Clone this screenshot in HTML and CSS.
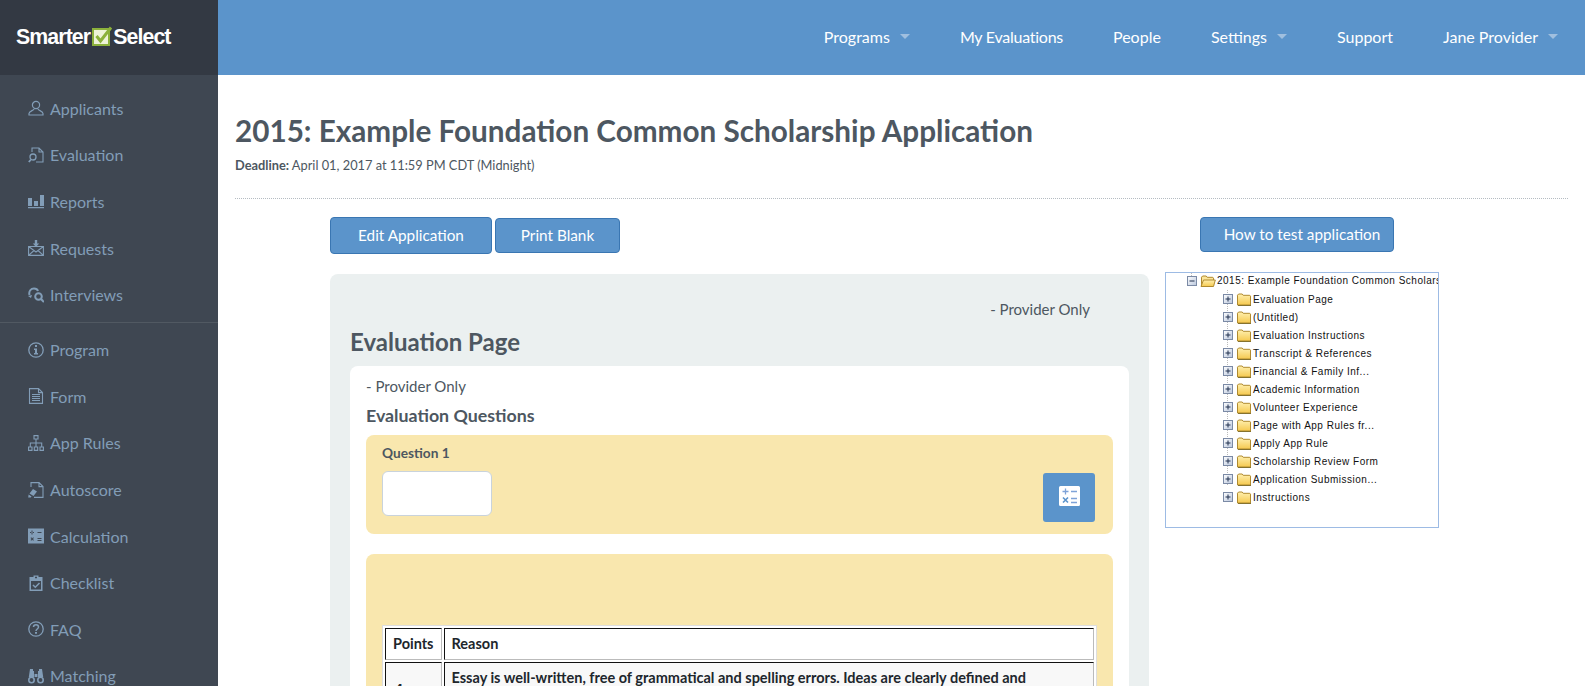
FILE: index.html
```html
<!DOCTYPE html>
<html lang="en">
<head>
<meta charset="utf-8">
<title>SmarterSelect</title>
<link rel="stylesheet" href="styles.css">
</head>
<body>
<svg class="defs" width="0" height="0">
  <defs>
    <linearGradient id="fold" x1="0" y1="0" x2="0" y2="1"><stop offset="0" stop-color="#fff0b0"/><stop offset="1" stop-color="#f5c94f"/></linearGradient>
    <linearGradient id="boxg" x1="0" y1="0" x2="1" y2="1"><stop offset="0" stop-color="#fff"/><stop offset="1" stop-color="#b9c6dc"/></linearGradient>
  </defs>
  <symbol id="folder" viewBox="0 0 16 14">
    <path d="M1.500 13V3.200L2.600 2h3.600l1 1.300h6.600l.7.800V13z" fill="url(#fold)" stroke="#b08a2e"/>
    <path d="M2 13.500h13" stroke="#85722f"/>
  </symbol>
  <symbol id="folder-open" viewBox="0 0 16 14">
    <path d="M1.500 12V3.200L2.600 2h3.600l1 1.300h5.600l.7.800V6" fill="#fbe59a" stroke="#b08a2e"/>
    <path d="M1 12.500L3.500 6h11.800l-1.800 6.500z" fill="url(#fold)" stroke="#b08a2e"/>
  </symbol>
  <symbol id="plus" viewBox="0 0 10 10">
    <rect x=".5" y=".5" width="9" height="9" fill="url(#boxg)" stroke="#7b8aa5"/>
    <path d="M2.500 5h5M5 2.500v5" stroke="#20304f"/>
  </symbol>
  <symbol id="minus" viewBox="0 0 10 10">
    <rect x=".5" y=".5" width="9" height="9" fill="url(#boxg)" stroke="#7b8aa5"/>
    <path d="M2.500 5h5" stroke="#20304f"/>
  </symbol>
</svg>
<div class="app">
  <aside class="sidebar">
    <div class="brand">
      <span class="brand-word">Smarter</span>
      <svg class="brand-check" viewBox="0 0 21 20" width="21" height="20"><rect x="1" y="3" width="16" height="16" fill="#eef3d8" stroke="#8cb13c" stroke-width="2"/><path d="M4.500 10l4 5L19 1.500" fill="none" stroke="#8cb13c" stroke-width="3"/></svg>
      <span class="brand-word">Select</span>
    </div>
    <nav class="side-nav">
      <a class="side-link"><svg class="side-icon" viewBox="0 0 16 16"><circle cx="8" cy="5" r="3.600" fill="none" stroke="currentColor" stroke-width="1.200"/><path d="M6 9c0 1.500-5 2-5 4.500V15h14v-1.500C15 11 10 10.500 10 9" fill="none" stroke="currentColor" stroke-width="1.200"/></svg>Applicants</a>
      <a class="side-link"><svg class="side-icon" viewBox="0 0 16 16"><path d="M4 5V1h7l4 4v10H8M11 1v4h4" fill="none" stroke="currentColor" stroke-width="1.100"/><circle cx="5" cy="10" r="3" fill="none" stroke="currentColor" stroke-width="1.300"/><path d="M3 12.500L.8 15" stroke="currentColor" stroke-width="1.800"/></svg>Evaluation</a>
      <a class="side-link"><svg class="side-icon" viewBox="0 0 16 16"><path fill="currentColor" d="M0 5h4v8H0zM6 8h4v5H6zM12 2h4v11h-4zM0 14h16v1.200H0z"/></svg>Reports</a>
      <a class="side-link"><svg class="side-icon" viewBox="0 0 16 16"><path d="M.6 6.500h14.800v8.900H.6zM.6 6.500L8 12l7.400-5.500M.6 15.400L6 10.500M15.400 15.400L10 10.500" fill="none" stroke="currentColor" stroke-width="1.100"/><path fill="currentColor" d="M6.800 0h2.400v3.500h2L8 7 4.800 3.500h2z"/></svg>Requests</a>
      <a class="side-link"><svg class="side-icon" viewBox="0 0 16 16"><path d="M1.500 8C.5 4 3 1.500 6 1.500c2 0 3.500 1 4 2.500" fill="none" stroke="currentColor" stroke-width="2"/><path fill="currentColor" d="M0 9l4-1-1 3z"/><circle cx="10.500" cy="9.500" r="3.300" fill="none" stroke="currentColor" stroke-width="2"/><path d="M13 12l3 3" stroke="currentColor" stroke-width="2.200"/></svg>Interviews</a>
      <div class="side-sep"></div>
      <a class="side-link"><svg class="side-icon" viewBox="0 0 16 16"><circle cx="8" cy="8" r="7.200" fill="none" stroke="currentColor" stroke-width="1.300"/><path fill="currentColor" d="M7 3h2v2H7zM6 6.500h3V11h1v1.500H6V11h1V8H6z"/></svg>Program</a>
      <a class="side-link"><svg class="side-icon" viewBox="0 0 16 16"><path d="M1.500.6h9l4 4v10.800h-13zM10.500.6v4h4" fill="none" stroke="currentColor" stroke-width="1.100"/><path d="M4 6.500h8M4 8.500h8M4 10.500h8M4 12.500h8" stroke="currentColor"/></svg>Form</a>
      <a class="side-link"><svg class="side-icon" viewBox="0 0 16 16"><path d="M6 .6h4v3.400H6zM.6 12h3.400v3.400H.6zM6.300 12h3.400v3.400H6.300zM12 12h3.400v3.400H12zM8 4v8M2.300 12V8h11.400v4" fill="none" stroke="currentColor" stroke-width="1.100"/></svg>App Rules</a>
      <a class="side-link"><svg class="side-icon" viewBox="0 0 16 16"><path d="M3 5V.6h8l4 4v10.800H6M11 .6v4h4" fill="none" stroke="currentColor" stroke-width="1.100"/><path fill="currentColor" d="M5 7l4 2.500L5.500 14 1.500 11.500zM.6 12.500l3 2-1 1H.2z"/></svg>Autoscore</a>
      <a class="side-link"><svg class="side-icon" viewBox="0 0 16 16"><path fill="currentColor" fill-rule="evenodd" d="M0 .5h16v15H0zM2 4h4v1H2zM3.500 2.500h1v4h-1zM9.500 4h4v1h-4zM2.500 10l.7-.7 1 1 1-1 .7.700-1 1 1 1-.7.700-1-1-1 1-.7-.7 1-1zM9.500 10h4v1h-4zM9.500 12h4v1h-4z"/></svg>Calculation</a>
      <a class="side-link"><svg class="side-icon" viewBox="0 0 16 16"><path fill="currentColor" fill-rule="evenodd" d="M1.500 2H5.500V.5h5V2h4v14h-13zM3 6v8.500h10V6zM7 1.800v1.500h2V1.800z"/><path d="M5 10l2.300 2.300L11.500 8" fill="none" stroke="currentColor" stroke-width="1.500"/></svg>Checklist</a>
      <a class="side-link"><svg class="side-icon" viewBox="0 0 16 16"><circle cx="8" cy="8" r="7.200" fill="none" stroke="currentColor" stroke-width="1.300"/><path d="M5.500 6c0-3 5-3 5 0 0 2-2.500 2-2.500 4" fill="none" stroke="currentColor" stroke-width="1.500"/><path fill="currentColor" d="M7 11h2v1.800H7z"/></svg>FAQ</a>
      <a class="side-link"><svg class="side-icon" viewBox="0 0 16 16"><circle cx="3.500" cy="12" r="2.700" fill="none" stroke="currentColor" stroke-width="1.600"/><circle cx="12.500" cy="12" r="2.700" fill="none" stroke="currentColor" stroke-width="1.600"/><path fill="currentColor" d="M2 1h3v2h1v6H1.500L.8 9zM11 1h3l1.200 8H10V3h1zM6.500 6h3v3h-3z"/></svg>Matching</a>
    </nav>
  </aside>
  <div class="main">
    <header class="topbar">
      <a class="top-link">Programs<span class="caret"></span></a>
      <a class="top-link top-link-tight">My Evaluations</a>
      <a class="top-link">People</a>
      <a class="top-link">Settings<span class="caret"></span></a>
      <a class="top-link">Support</a>
      <a class="top-link">Jane Provider<span class="caret"></span></a>
    </header>
    <div class="content">
      <h1 class="page-title">2015: Example Foundation Common Scholarship Application</h1>
      <p class="deadline"><b>Deadline:</b> April 01, 2017 at 11:59 PM CDT (Midnight)</p>
      <div class="rule"></div>
      <div class="columns">
        <div class="left-col">
          <div class="btn-row">
            <a class="btn btn-edit">Edit Application</a>
            <a class="btn btn-print">Print Blank</a>
          </div>
          <section class="panel">
            <div class="panel-note">- Provider Only</div>
            <h2 class="panel-title">Evaluation Page</h2>
            <div class="card">
              <div class="card-note">- Provider Only</div>
              <h3 class="card-title">Evaluation Questions</h3>
              <div class="question">
                <div class="q-main">
                  <div class="q-label">Question 1</div>
                  <div class="q-input"></div>
                </div>
                <a class="calc-btn"><svg viewBox="0 0 21 20" width="21" height="20"><path fill="#fff" d="M1.500 0h18A1.500 1.500 0 0 1 21 1.500v17a1.500 1.500 0 0 1-1.500 1.500h-18A1.500 1.500 0 0 1 0 18.500v-17A1.500 1.500 0 0 1 1.500 0z"/><path d="M3.500 5.500h6M6.500 2.500v6M12 5.500h6M12 12.500h6M12 16.500h6" stroke="#7fa3d8" stroke-width="1.300"/><path d="M4 11.500l5 5M9 11.500l-5 5" stroke="#5b93cb" stroke-width="1.600"/></svg></a>
              </div>
              <div class="rubric">
                <table class="rubric-table">
                  <tr><th class="pts">Points</th><th>Reason</th></tr>
                  <tr class="alt"><td class="pts pts-num">4</td><td>Essay is well-written, free of grammatical and spelling errors. Ideas are clearly defined and</td></tr>
                </table>
              </div>
            </div>
          </section>
        </div>
        <div class="right-col">
          <a class="btn btn-how">How to test application</a>
          <div class="tree">
            <div class="tree-root"><svg class="t-box"><use href="#minus"/></svg><svg class="t-folder"><use href="#folder-open"/></svg>2015: Example Foundation Common Scholarship Application</div>
            <ul class="tree-list">
              <li><svg class="t-box"><use href="#plus"/></svg><svg class="t-folder"><use href="#folder"/></svg>Evaluation Page</li>
              <li><svg class="t-box"><use href="#plus"/></svg><svg class="t-folder"><use href="#folder"/></svg>(Untitled)</li>
              <li><svg class="t-box"><use href="#plus"/></svg><svg class="t-folder"><use href="#folder"/></svg>Evaluation Instructions</li>
              <li><svg class="t-box"><use href="#plus"/></svg><svg class="t-folder"><use href="#folder"/></svg>Transcript &amp; References</li>
              <li><svg class="t-box"><use href="#plus"/></svg><svg class="t-folder"><use href="#folder"/></svg>Financial &amp; Family Inf...</li>
              <li><svg class="t-box"><use href="#plus"/></svg><svg class="t-folder"><use href="#folder"/></svg>Academic Information</li>
              <li><svg class="t-box"><use href="#plus"/></svg><svg class="t-folder"><use href="#folder"/></svg>Volunteer Experience</li>
              <li><svg class="t-box"><use href="#plus"/></svg><svg class="t-folder"><use href="#folder"/></svg>Page with App Rules fr...</li>
              <li><svg class="t-box"><use href="#plus"/></svg><svg class="t-folder"><use href="#folder"/></svg>Apply App Rule</li>
              <li><svg class="t-box"><use href="#plus"/></svg><svg class="t-folder"><use href="#folder"/></svg>Scholarship Review Form</li>
              <li><svg class="t-box"><use href="#plus"/></svg><svg class="t-folder"><use href="#folder"/></svg>Application Submission...</li>
              <li><svg class="t-box"><use href="#plus"/></svg><svg class="t-folder"><use href="#folder"/></svg>Instructions</li>
            </ul>
          </div>
        </div>
      </div>
    </div>
  </div>
</div>
</body>
</html>
```
FILE: styles.css
```css
* { box-sizing: border-box; }
html, body { margin: 0; height: 686px; overflow: hidden; }
body { font-family: "Lato", "Liberation Sans", sans-serif; color: #4d5761; background: #fff; }
.defs { position: absolute; width: 0; height: 0; }
.app { display: grid; grid-template-columns: 218px 1fr; height: 686px; overflow: hidden; }

.sidebar { background: #3f4752; overflow: hidden; height: 686px; }
.brand { height: 75px; background: #333943; display: flex; align-items: center; padding: 0 0 0 16px; }
.brand-word { font-family: "Liberation Sans", sans-serif; font-weight: 700; font-size: 21.3px; letter-spacing: -0.9px; color: #fff; }
.brand-check { margin: -3px 0 0 2px; }
.side-nav { display: flex; flex-direction: column; padding-top: 10px; }
.side-link { display: flex; align-items: center; height: 46.6px; padding-left: 28px; color: #829db7; font-size: 16px; }
.side-icon { width: 16px; height: 16px; margin-right: 6px; flex: none; }
.side-sep { height: 1px; background: #515962; margin: 4px 0 3.500px; }

.main { min-width: 0; height: 686px; display: flex; flex-direction: column; overflow: hidden; }
.topbar { height: 75px; flex: none; background: #5b94cb; display: flex; justify-content: flex-end; align-items: center; padding: 0 27px 2px 0; gap: 50px; }
.top-link { color: #fff; font-size: 16px; display: flex; align-items: center; }
.top-link-tight { letter-spacing: -0.25px; }
.caret { width: 0; height: 0; margin-left: 10px; border: 5px solid transparent; border-top: 5px solid #a0bfdf; border-bottom: 0; }

.content { padding: 38px 17px 0 17px; flex: 1; min-height: 0; overflow: hidden; }
.page-title { margin: 0; font-size: 29.7px; line-height: 36px; font-weight: 700; color: #4d5761; }
.deadline { margin: 6px 0 0; font-size: 12.8px; line-height: 20px; color: #4d5761; }
.rule { border-top: 1px dotted #b5bcc2; margin-top: 23px; }

.columns { display: flex; padding-left: 95px; margin-top: 18px; }
.left-col { width: 819px; }
.right-col { width: 274px; margin-left: 16px; display: flex; flex-direction: column; }
.btn-row { display: flex; align-items: center; gap: 3px; height: 37px; }
.btn { display: flex; align-items: center; justify-content: center; background: #5b94cb; border: 1px solid #3a76b2; border-radius: 4px; color: #fff; font-size: 15.3px; padding-bottom: 2px; }
.btn-edit { width: 162px; height: 37px; }
.btn-print { width: 125px; height: 35px; }
.btn-how { width: 194px; height: 35px; margin-left: 35px; padding-left: 10px; }

.panel { background: #ebf0f0; border-radius: 8px 8px 0 0; margin-top: 20px; padding: 23px 20px 0; height: 412px; overflow: hidden; }
.panel-note { text-align: right; font-size: 15px; line-height: 24px; padding-right: 39px; }
.panel-title { margin: 5px 0 0; font-size: 24px; line-height: 32px; font-weight: 700; }
.card { background: #fff; border-radius: 8px 8px 0 0; margin-top: 8px; padding: 9px 16px 0; height: 400px; }
.card-note { font-size: 15px; line-height: 22px; }
.card-title { margin: 6px 0 0; font-size: 17.8px; line-height: 24px; font-weight: 700; }
.question { display: flex; justify-content: space-between; align-items: flex-end; background: #f9e7ae; border-radius: 8px; margin-top: 8px; height: 99px; padding: 9px 18px 12px 16px; }
.q-main { align-self: flex-start; }
.q-label { font-size: 13.700px; line-height: 18px; font-weight: 700; }
.q-input { width: 110px; height: 45px; margin-top: 9px; background: #fff; border: 1px solid #c9d3dc; border-radius: 6px; }
.calc-btn { width: 52px; height: 49px; display: flex; align-items: center; justify-content: center; background: #5b94cb; border-radius: 3px; padding-bottom: 4px; }
.rubric { background: #f9e7ae; border-radius: 8px 8px 0 0; margin-top: 20px; height: 200px; padding: 71px 16px 0; }
.rubric-table { width: 100%; border-collapse: separate; border-spacing: 2px; border: 1px solid #ddd; background: #fff; font-size: 14.500px; font-weight: 700; color: #20262c; }
.rubric-table th, .rubric-table td { border-top: 1px solid #111; border-left: 1px solid #111; border-right: 1px solid #bbb; border-bottom: 1px solid #bbb; padding: 6px 7px; text-align: left; line-height: 18px; }
.rubric-table .pts { width: 55px; }
.alt td { background: #f8f8f8; vertical-align: top; }
.rubric-table .pts-num { font-size: 18px; padding-top: 19px; padding-bottom: 20px; }

.tree { margin-top: 20px; height: 256px; border: 1px solid #9dbbe4; overflow: hidden; padding-top: 0; font-family: "Liberation Sans", sans-serif; font-size: 10px; letter-spacing: 0.5px; color: #111; white-space: nowrap; }
.tree-root { display: flex; align-items: center; height: 15px; padding-left: 21px; background: repeating-linear-gradient(to bottom, #bbb 0 1px, transparent 1px 2px) 25px 0 / 1px 5px no-repeat; }
.tree-list { list-style: none; margin: 2px 0 0; padding: 0 0 0 57px; background: repeating-linear-gradient(to bottom, #bbb 0 1px, transparent 1px 2px) 61px 0 / 1px 196px no-repeat; }
.tree-list li { display: flex; align-items: center; height: 18px; }
.t-box { width: 10px; height: 10px; margin-right: 3px; flex: none; }
.t-folder { width: 16px; height: 14px; margin-right: 1px; flex: none; }
```
